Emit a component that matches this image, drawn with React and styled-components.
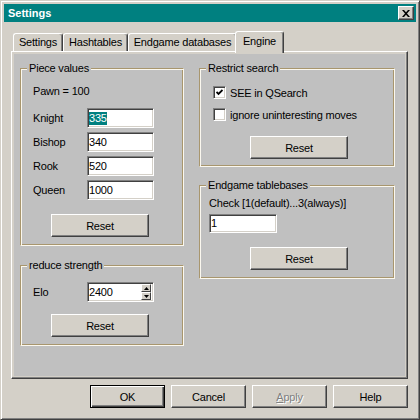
import React from 'react';
import styled, { createGlobalStyle } from 'styled-components';

const FACE = '#d4d0c8';
const DARK = '#404040';
const SHADOW = '#808080';
const ETCH_DARK = '#a8966e';
const ETCH_LIGHT = '#fbf8ef';

const GlobalStyle = createGlobalStyle`
  html, body { margin: 0; padding: 0; background: ${FACE}; }
  body {
    font-family: "Liberation Sans", Arial, sans-serif;
    font-size: 11px;
    letter-spacing: -0.2px;
    color: #000;
  }
  * { box-sizing: border-box; }
`;

const Window = styled.div`
  width: 420px;
  height: 420px;
  display: flex;
  flex-direction: column;
  padding: 3px;
  background: ${FACE};
  border: 1px solid;
  border-color: ${FACE} ${DARK} ${DARK} ${FACE};
  box-shadow: inset 1px 1px #fff, inset -1px -1px ${SHADOW};
`;

const TitleBar = styled.div`
  flex: none;
  height: 18px;
  display: flex;
  align-items: center;
  justify-content: space-between;
  padding: 0 2px 0 4px;
  background: #008080;
  color: #fff;
  font-weight: bold;
  letter-spacing: 0;
`;

const CloseBtn = styled.div`
  width: 16px;
  height: 14px;
  display: flex;
  align-items: center;
  justify-content: center;
  background: ${FACE};
  border: 1px solid;
  border-color: #fff ${DARK} ${DARK} #fff;
  box-shadow: inset -1px -1px ${SHADOW};
`;

const Body = styled.div`
  flex: 1;
  display: flex;
  flex-direction: column;
  padding: 9px 8px 8px 7px;
`;

const TabStrip = styled.div`
  flex: none;
  height: 20px;
  display: flex;
  align-items: flex-end;
  padding-left: 2px;
`;

const Tab = styled.div`
  width: ${p => p.$w}px;
  height: ${p => (p.$active ? 22 : 18)}px;
  margin: ${p => (p.$active ? '0 0 -2px -2px' : '0')};
  position: relative;
  z-index: ${p => (p.$active ? 2 : 1)};
  display: flex;
  align-items: center;
  justify-content: center;
  padding-bottom: ${p => (p.$active ? 3 : 1)}px;
  background: ${FACE};
  border-top: 1px solid #fff;
  border-left: 1px solid #fff;
  border-right: 1px solid ${DARK};
  border-radius: 3px 3px 0 0;
  box-shadow: inset -1px 0 ${SHADOW};
  white-space: nowrap;
`;

const Panel = styled.div`
  flex: 1;
  display: flex;
  padding: 2px;
  background: ${FACE};
  border: 1px solid;
  border-color: #fff ${DARK} ${DARK} #fff;
  box-shadow: inset -1px -1px ${SHADOW};
`;

const Sheet = styled.div`
  flex: 1;
  display: flex;
  align-items: flex-start;
  gap: 15px;
  padding: 8px 0 0 6px;
  background: #c0c0c0;
`;

const Column = styled.div`
  width: ${p => p.$w}px;
  display: flex;
  flex-direction: column;
`;

const Group = styled.div`
  display: flex;
  flex-direction: column;
  margin-top: ${p => p.$mt || 0}px;
`;

const GroupHead = styled.div`
  display: flex;
  height: 13px;
`;

const HeadLeft = styled.div`
  width: 7px;
  margin-top: 6px;
  border-top: 1px solid ${ETCH_DARK};
  border-left: 1px solid ${ETCH_DARK};
  box-shadow: inset 1px 1px ${ETCH_LIGHT};
`;

const Caption = styled.span`
  padding: 0 2px;
  line-height: 13px;
  white-space: nowrap;
`;

const HeadRight = styled.div`
  flex: 1;
  margin-top: 6px;
  border-top: 1px solid ${ETCH_DARK};
  border-right: 1px solid ${ETCH_LIGHT};
  box-shadow: inset 0 1px ${ETCH_LIGHT}, inset -1px 0 ${ETCH_DARK};
`;

const GroupBody = styled.div`
  display: flex;
  flex-direction: column;
  align-items: flex-start;
  padding: ${p => p.$pad};
  border-left: 1px solid ${ETCH_DARK};
  border-right: 1px solid ${ETCH_LIGHT};
  border-bottom: 1px solid ${ETCH_LIGHT};
  box-shadow: inset 1px 0 ${ETCH_LIGHT}, inset -1px -1px ${ETCH_DARK};
`;

const Text = styled.div`
  line-height: 13px;
  white-space: nowrap;
  margin-bottom: ${p => p.$mb || 0}px;
`;

const FieldStack = styled.div`
  display: flex;
  flex-direction: column;
  gap: 4px;
`;

const FieldRow = styled.div`
  display: flex;
  align-items: center;
  height: 20px;
`;

const FieldLabel = styled.span`
  width: 54px;
`;

const TextBox = styled.div`
  width: ${p => p.$w}px;
  height: ${p => p.$h || 20}px;
  margin-top: ${p => p.$mt || 0}px;
  display: flex;
  align-items: center;
  justify-content: space-between;
  padding: 0 1px;
  background: #fff;
  border: 1px solid;
  border-color: ${SHADOW} #fff #fff ${SHADOW};
  box-shadow: inset 1px 1px ${DARK}, inset -1px -1px ${FACE};
  line-height: 13px;
`;

const Selected = styled.span`
  background: #008080;
  color: #fff;
`;

const Spinner = styled.div`
  display: flex;
  flex-direction: column;
  margin-right: 1px;
`;

const SpinBtn = styled.div`
  width: 10px;
  height: 8px;
  display: flex;
  align-items: center;
  justify-content: center;
  background: ${FACE};
  border: 1px solid;
  border-color: #fff ${DARK} ${DARK} #fff;
`;

const CheckRow = styled.div`
  display: flex;
  align-items: center;
  gap: 4px;
  height: 13px;
  margin-bottom: ${p => p.$mb || 0}px;
  white-space: nowrap;
`;

const CheckBox = styled.div`
  width: 13px;
  height: 13px;
  display: flex;
  align-items: center;
  justify-content: center;
  background: #fff;
  border: 1px solid;
  border-color: ${SHADOW} #fff #fff ${SHADOW};
  box-shadow: inset 1px 1px ${DARK}, inset -1px -1px ${FACE};
`;

const Btn = styled.button`
  width: ${p => p.$w}px;
  height: 23px;
  margin: ${p => p.$m || 0};
  padding: 0;
  font-family: inherit;
  font-size: 11px;
  letter-spacing: inherit;
  color: ${p => (p.$disabled ? SHADOW : '#000')};
  text-shadow: ${p => (p.$disabled ? '1px 1px #fff' : 'none')};
  background: ${FACE};
  border: 1px solid;
  border-color: ${p => (p.$default ? '#000' : `#fff ${DARK} ${DARK} #fff`)};
  box-shadow: ${p =>
    p.$default
      ? `inset 1px 1px #fff, inset -1px -1px ${DARK}, inset -2px -2px ${SHADOW}`
      : `inset -1px -1px ${SHADOW}`};
`;

const ButtonRow = styled.div`
  flex: none;
  display: flex;
  justify-content: flex-end;
  gap: 6px;
  margin-top: 6px;
`;

const CloseGlyph = () => (
  <svg width="8" height="7" viewBox="0 0 8 7">
    <path d="M0 0h2l2 2.2L6 0h2L5 3.5 8 7H6L4 4.8 2 7H0l3-3.5z" fill="#000" />
  </svg>
);

const CheckGlyph = () => (
  <svg width="7" height="7" viewBox="0 0 7 7">
    <path d="M0.5 3 L2.5 5 L6.5 1" stroke="#000" strokeWidth="1.8" fill="none" />
  </svg>
);

const Arrow = ({ up }) => (
  <svg width="5" height="3" viewBox="0 0 5 3">
    <path d={up ? 'M2.5 0L5 3H0z' : 'M0 0h5L2.5 3z'} fill="#000" />
  </svg>
);

const pieces = [
  { name: 'Knight', value: '335', selected: true },
  { name: 'Bishop', value: '340' },
  { name: 'Rook', value: '520' },
  { name: 'Queen', value: '1000' },
];

const GroupBox = ({ title, pad, mt, children }) => (
  <Group $mt={mt}>
    <GroupHead>
      <HeadLeft />
      <Caption>{title}</Caption>
      <HeadRight />
    </GroupHead>
    <GroupBody $pad={pad}>{children}</GroupBody>
  </Group>
);

export default function App() {
  return (
    <>
      <GlobalStyle />
      <Window>
        <TitleBar>
          <span>Settings</span>
          <CloseBtn>
            <CloseGlyph />
          </CloseBtn>
        </TitleBar>
        <Body>
          <TabStrip>
            <Tab $w={50}>Settings</Tab>
            <Tab $w={65}>Hashtables</Tab>
            <Tab $w={109}>Endgame databases</Tab>
            <Tab $w={49} $active>Engine</Tab>
          </TabStrip>
          <Panel>
            <Sheet>
              <Column $w={164}>
                <GroupBox title="Piece values" pad="10px 0 8px 12px">
                  <Text $mb={10}>Pawn = 100</Text>
                  <FieldStack>
                    {pieces.map(p => (
                      <FieldRow key={p.name}>
                        <FieldLabel>{p.name}</FieldLabel>
                        <TextBox $w={67}>
                          {p.selected ? <Selected>{p.value}</Selected> : <span>{p.value}</span>}
                        </TextBox>
                      </FieldRow>
                    ))}
                  </FieldStack>
                  <Btn $w={98} $m="14px 0 0 18px">Reset</Btn>
                </GroupBox>
                <GroupBox title="reduce strength" mt={13} pad="10px 0 8px 12px">
                  <FieldRow>
                    <FieldLabel>Elo</FieldLabel>
                    <TextBox $w={67}>
                      <span>2400</span>
                      <Spinner>
                        <SpinBtn><Arrow up /></SpinBtn>
                        <SpinBtn><Arrow /></SpinBtn>
                      </Spinner>
                    </TextBox>
                  </FieldRow>
                  <Btn $w={98} $m="12px 0 0 18px">Reset</Btn>
                </GroupBox>
              </Column>
              <Column $w={196}>
                <GroupBox title="Restrict search" pad="11px 0 7px 13px">
                  <CheckRow $mb={9}>
                    <CheckBox><CheckGlyph /></CheckBox>
                    <span>SEE in QSearch</span>
                  </CheckRow>
                  <CheckRow>
                    <CheckBox />
                    <span>ignore uninteresting moves</span>
                  </CheckRow>
                  <Btn $w={98} $m="15px 0 0 37px">Reset</Btn>
                </GroupBox>
                <GroupBox title="Endgame tablebases" mt={12} pad="5px 0 8px 9px">
                  <Text>Check [1(default)...3(always)]</Text>
                  <TextBox $w={68} $h={19} $mt={4}>
                    <span>1</span>
                  </TextBox>
                  <Btn $w={98} $m="14px 0 0 41px">Reset</Btn>
                </GroupBox>
              </Column>
            </Sheet>
          </Panel>
          <ButtonRow>
            <Btn $w={75} $default>OK</Btn>
            <Btn $w={75}>Cancel</Btn>
            <Btn $w={75} $disabled><u>A</u>pply</Btn>
            <Btn $w={75}>Help</Btn>
          </ButtonRow>
        </Body>
      </Window>
    </>
  );
}
